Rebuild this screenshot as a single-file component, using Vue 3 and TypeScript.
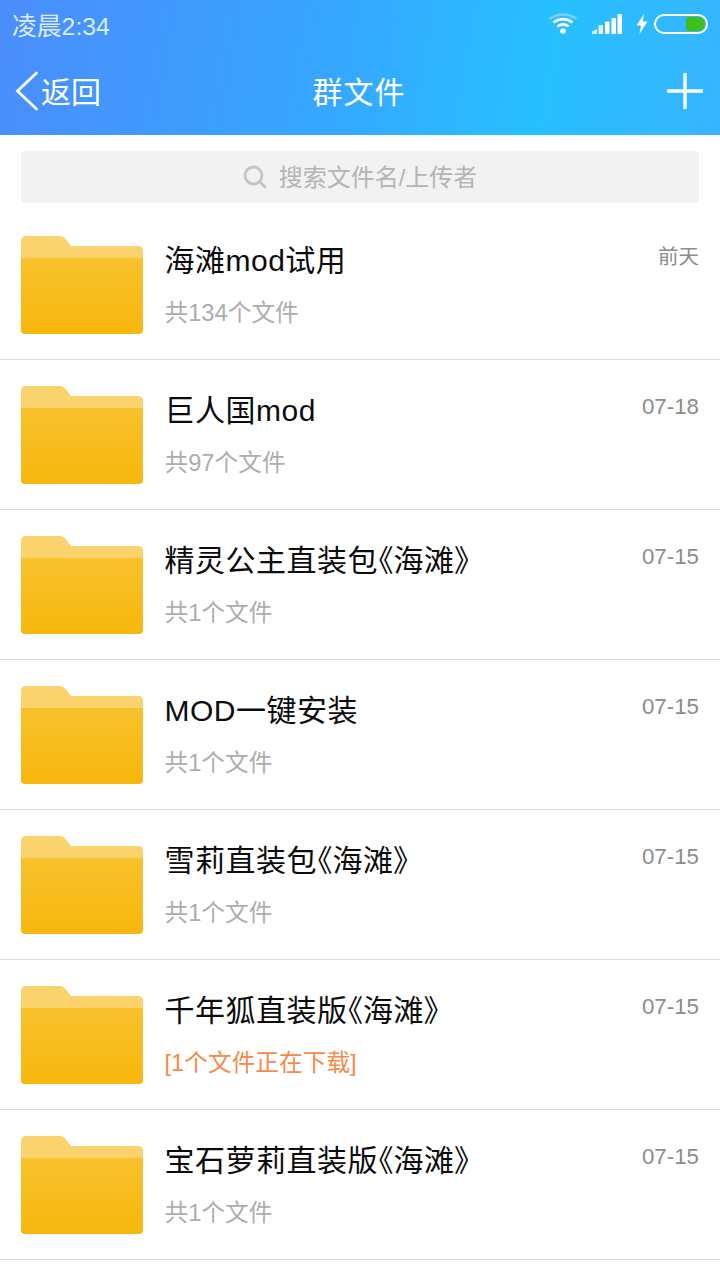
<script setup lang="ts">
interface Row { name: string; sub: string; date: string; active?: boolean }
const rows: Row[] = [
  { name: '海滩mod试用', sub: '共134个文件', date: '前天' },
  { name: '巨人国mod', sub: '共97个文件', date: '07-18' },
  { name: '精灵公主直装包《海滩》', sub: '共1个文件', date: '07-15' },
  { name: 'MOD一键安装', sub: '共1个文件', date: '07-15' },
  { name: '雪莉直装包《海滩》', sub: '共1个文件', date: '07-15' },
  { name: '千年狐直装版《海滩》', sub: '[1个文件正在下载]', date: '07-15', active: true },
  { name: '宝石萝莉直装版《海滩》', sub: '共1个文件', date: '07-15' },
]
</script>

<template>
  <div class="page">
    <header class="header">
      <div class="status">
        <span class="clock">凌晨2:34</span>
        <div class="status-icons">
          <svg class="wifi" width="30" height="22" viewBox="0 0 30 22" fill="none" stroke="#fff" stroke-width="2.6">
            <path d="M1.500 6C9.500 0 20.500 0 28.500 6" stroke-opacity="0.35" />
            <path d="M5.500 9.500C11 5 19 5 24.500 9.500" />
            <path d="M9.500 13.500C12.800 11 17.200 11 20.500 13.500" />
            <circle cx="15" cy="18" r="2.800" fill="#fff" stroke="none" />
          </svg>
          <svg class="signal" width="30" height="20" viewBox="0 0 30 20" fill="#fff">
            <path d="M0 20V17.500L5 15V20Z" fill-opacity="0.8" />
            <rect x="6.500" y="11" width="4.500" height="9" rx="1" fill-opacity="0.85" />
            <rect x="13" y="7.500" width="4.500" height="12.500" rx="1" />
            <rect x="19.500" y="4" width="4.500" height="16" rx="1" />
            <rect x="25.500" y="0" width="4.500" height="20" rx="1" />
          </svg>
          <svg class="bolt" width="12" height="20" viewBox="0 0 12 20" fill="#fff">
            <path d="M8 0L0.500 11.500H5L3.500 20L11.500 7.500H6.800Z" />
          </svg>
          <div class="battery"><span class="battery-fill"></span></div>
        </div>
      </div>
      <nav class="nav">
        <div class="back">
          <svg width="24" height="40" viewBox="0 0 24 40" fill="none" stroke="#fff" stroke-width="2.800" stroke-linecap="round">
            <path d="M21.500 2L2.500 20L21.500 38" />
          </svg>
          <span class="nav-text">返回</span>
        </div>
        <div class="title nav-text">群文件</div>
        <svg class="plus" width="36" height="36" viewBox="0 0 36 36" stroke="#fff" stroke-width="3.400" stroke-linecap="round">
          <path d="M18 1V35M1 18H35" />
        </svg>
      </nav>
    </header>

    <div class="search-wrap">
      <div class="search">
        <svg width="24" height="24" viewBox="0 0 24 24" fill="none" stroke="#c4c4c4" stroke-width="2.800" stroke-linecap="round">
          <circle cx="10.500" cy="10.500" r="8.500" />
          <path d="M17 17L22 22" />
        </svg>
        <span class="search-text">搜索文件名/上传者</span>
      </div>
    </div>

    <ul class="list">
      <li v-for="(row, i) in rows" :key="row.name" class="row">
        <svg class="folder" width="122" height="98" viewBox="0 0 122 98">
          <defs>
            <linearGradient :id="'g' + i" x1="0" y1="0" x2="0" y2="1">
              <stop offset="0" stop-color="#f8c22e" />
              <stop offset="1" stop-color="#f7b70c" />
            </linearGradient>
          </defs>
          <path d="M0 5Q0 0 5 0H38Q42 0 44.500 3L50 10H117Q122 10 122 15V24H0Z" fill="#fbd36c" />
          <path d="M0 22H122V94Q122 98 118 98H4Q0 98 0 94Z" :fill="'url(#g' + i + ')'" />
        </svg>
        <div class="info">
          <div class="name">{{ row.name }}</div>
          <div class="sub" :class="{ active: row.active }">{{ row.sub }}</div>
        </div>
        <div class="date" :class="{ word: row.date === '前天' }">{{ row.date }}</div>
      </li>
    </ul>
  </div>
</template>

<style>
html, body { margin: 0; background: #fff; }
</style>

<style scoped>
.page {
  width: 720px;
  height: 1280px;
  overflow: hidden;
  background: #fff;
  font-family: "Liberation Sans", "Noto Sans CJK SC", "Noto Sans", sans-serif;
}
.header {
  height: 135px;
  background: linear-gradient(100deg, #4b8dfb 0%, #36a6ff 45%, #27c0ff 75%, #38b4ff 100%);
  color: #fff;
}
.status {
  height: 52px;
  padding: 0 12px;
  display: flex;
  align-items: center;
  justify-content: space-between;
}
.clock {
  font-size: 24.800px;
  color: #dcebff;
  margin-top: -5px;
}
.status-icons {
  display: flex;
  align-items: center;
  margin-top: -4px;
}
.wifi { margin-right: 14px; }
.signal { margin-right: 14px; }
.bolt { margin-right: 6px; }
.battery {
  box-sizing: border-box;
  width: 54px;
  height: 20px;
  border: 2px solid #fff;
  border-radius: 10px;
  padding: 1px;
  display: flex;
  justify-content: flex-end;
}
.battery-fill {
  width: 19px;
  background: #3fbf1c;
  border-radius: 2px 7px 7px 2px;
}
.nav {
  height: 83px;
  display: grid;
  grid-template-columns: 1fr auto 1fr;
  align-items: center;
  padding: 0 17px 6px 15px;
  box-sizing: border-box;
}
.back {
  display: flex;
  align-items: center;
  gap: 2px;
  font-size: 30px;
}
.nav-text { margin-top: -2px; }
.title {
  font-size: 30px;
  letter-spacing: 1px;
}
.plus { justify-self: end; }
.search-wrap {
  padding: 16px 21px 0;
}
.search {
  height: 52px;
  background: #f2f2f2;
  border-radius: 4px;
  display: flex;
  align-items: center;
  justify-content: center;
  gap: 12px;
  font-size: 24px;
  color: #b4b4b4;
}
.search-text { margin-top: -3px; }
.list {
  list-style: none;
  margin: 7px 0 0;
  padding: 0;
}
.row {
  box-sizing: border-box;
  height: 150px;
  padding: 26px 21px 0;
  border-bottom: 1px solid #dcdcdc;
  display: flex;
  align-items: flex-start;
}
.folder { flex: none; }
.info {
  flex: 1;
  min-width: 0;
  margin-left: 21.500px;
}
.name {
  margin-top: 4px;
  font-size: 30px;
  letter-spacing: 0.5px;
  line-height: 42px;
  color: #0c0c0c;
  font-feature-settings: "palt";
}
.sub {
  margin-top: 14px;
  font-size: 23.700px;
  line-height: 34px;
  color: #adadad;
}
.sub.active { color: #f58a4a; }
.date {
  font-size: 22.300px;
  line-height: 30px;
  color: #8c8c8c;
  margin-top: 6px;
}
.date.word { font-size: 20.500px; }
</style>
